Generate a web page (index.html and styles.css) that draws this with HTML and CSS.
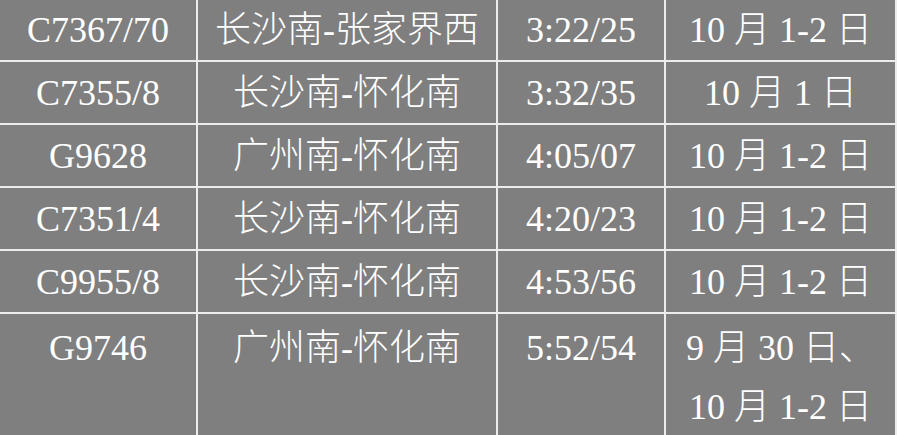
FILE: index.html
```html
<!DOCTYPE html>
<html lang="zh-CN">
<head>
<meta charset="utf-8">
<title>列车时刻</title>
<link rel="stylesheet" href="styles.css">
</head>
<body>
<div class="schedule">
  <div class="cell">C7367/70</div>
  <div class="cell">长沙南-张家界西</div>
  <div class="cell">3:22/25</div>
  <div class="cell">10 月 1-2 日</div>

  <div class="cell">C7355/8</div>
  <div class="cell">长沙南-怀化南</div>
  <div class="cell">3:32/35</div>
  <div class="cell">10 月 1 日</div>

  <div class="cell">G9628</div>
  <div class="cell">广州南-怀化南</div>
  <div class="cell">4:05/07</div>
  <div class="cell">10 月 1-2 日</div>

  <div class="cell">C7351/4</div>
  <div class="cell">长沙南-怀化南</div>
  <div class="cell">4:20/23</div>
  <div class="cell">10 月 1-2 日</div>

  <div class="cell">C9955/8</div>
  <div class="cell">长沙南-怀化南</div>
  <div class="cell">4:53/56</div>
  <div class="cell">10 月 1-2 日</div>

  <div class="cell cell-tall">G9746</div>
  <div class="cell cell-tall">广州南-怀化南</div>
  <div class="cell cell-tall">5:52/54</div>
  <div class="cell cell-tall">9 月 30 日、<br>10 月 1-2 日</div>
</div>
</body>
</html>
```

FILE: styles.css
```css
html, body {
  margin: 0;
  padding: 0;
  background: #7f7f7f;
  overflow: hidden;
}

.schedule {
  display: grid;
  grid-template-columns: 196px 298px 166px 229px;
  grid-template-rows: 61px 61px 61px 61px 61px 130px;
  gap: 2px;
  padding: 2px;
  margin: -3px 0 0 -2px;
  width: max-content;
  background: #ececec;
  font-family: "Liberation Serif", "Noto Sans CJK SC", serif;
  font-size: 36px;
  font-weight: 300;
  color: #ffffff;
}

.cell {
  background: #7f7f7f;
  text-align: center;
  line-height: 59px;
  padding-top: 2px;
  white-space: nowrap;
}

.cell-tall {
  padding-top: 5px;
}
```
